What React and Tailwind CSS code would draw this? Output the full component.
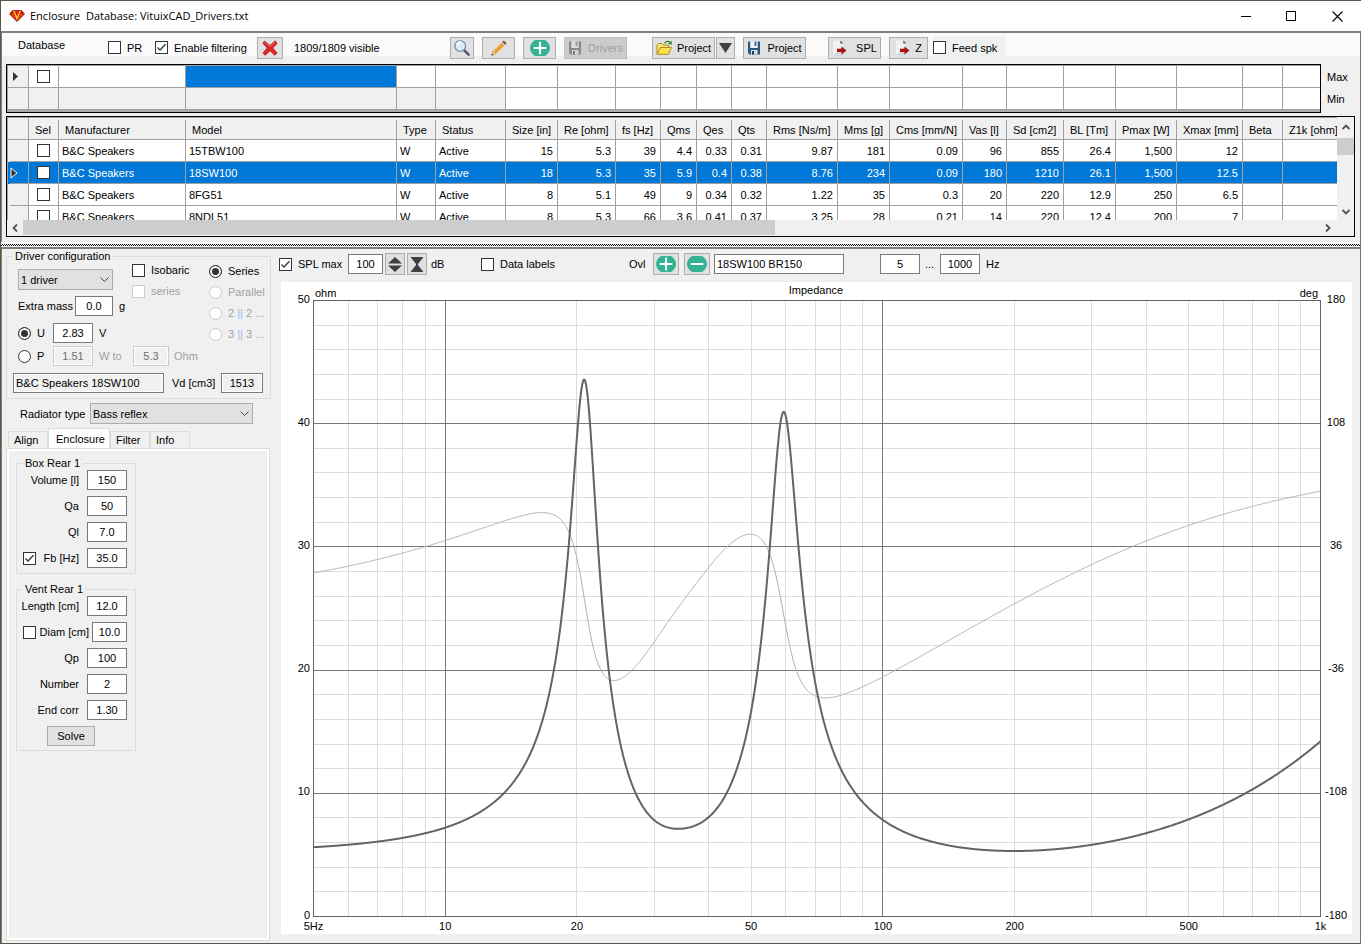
import { useState } from 'react';

const COLUMNS = [
  { label: 'Sel', width: 'w-[30px]' },
  { label: 'Manufacturer', width: 'w-[127px]' },
  { label: 'Model', width: 'w-[211px]' },
  { label: 'Type', width: 'w-[39px]' },
  { label: 'Status', width: 'w-[70px]' },
  { label: 'Size [in]', width: 'w-[52px]' },
  { label: 'Re [ohm]', width: 'w-[58px]' },
  { label: 'fs [Hz]', width: 'w-[45px]' },
  { label: 'Qms', width: 'w-[36px]' },
  { label: 'Qes', width: 'w-[35px]' },
  { label: 'Qts', width: 'w-[35px]' },
  { label: 'Rms [Ns/m]', width: 'w-[71px]' },
  { label: 'Mms [g]', width: 'w-[52px]' },
  { label: 'Cms [mm/N]', width: 'w-[73px]' },
  { label: 'Vas [l]', width: 'w-[44px]' },
  { label: 'Sd [cm2]', width: 'w-[57px]' },
  { label: 'BL [Tm]', width: 'w-[52px]' },
  { label: 'Pmax [W]', width: 'w-[61px]' },
  { label: 'Xmax [mm]', width: 'w-[66px]' },
  { label: 'Beta', width: 'w-[40px]' },
  { label: 'Z1k [ohm]', width: '' },
];

const DRIVERS = [
  ['B&C Speakers', '15TBW100', 'W', 'Active', '15', '5.3', '39', '4.4', '0.33', '0.31', '9.87', '181', '0.09', '96', '855', '26.4', '1,500', '12', '', ''],
  ['B&C Speakers', '18SW100', 'W', 'Active', '18', '5.3', '35', '5.9', '0.4', '0.38', '8.76', '234', '0.09', '180', '1210', '26.1', '1,500', '12.5', '', ''],
  ['B&C Speakers', '8FG51', 'W', 'Active', '8', '5.1', '49', '9', '0.34', '0.32', '1.22', '35', '0.3', '20', '220', '12.9', '250', '6.5', '', ''],
  ['B&C Speakers', '8NDL51', 'W', 'Active', '8', '5.3', '66', '3.6', '0.41', '0.37', '3.25', '28', '0.21', '14', '220', '12.4', '200', '7', '', ''],
];

// ---------- controls ----------

function CheckBox({ label, ...props }) {
  return (
    <label className="flex items-center gap-1.5 whitespace-nowrap has-disabled:text-[#a0a0a0]">
      <span className="grid shrink-0">
        <input
          type="checkbox"
          className="peer col-start-1 row-start-1 size-[13px] appearance-none border border-[#333] bg-white disabled:border-[#ccc]"
          {...props}
        />
        <svg viewBox="0 0 13 13" className="pointer-events-none invisible col-start-1 row-start-1 size-[13px] peer-checked:visible">
          <path d="M2.5 6.5 L5 9 L10.5 3.2" fill="none" stroke="#333" strokeWidth="1.3" />
        </svg>
      </span>
      {label && <span>{label}</span>}
    </label>
  );
}

function Radio({ label, ...props }) {
  return (
    <label className="flex items-center gap-1.5 whitespace-nowrap has-disabled:text-[#a0a0a0]">
      <input
        type="radio"
        className="size-[13px] shrink-0 appearance-none rounded-full border border-[#333] bg-white checked:bg-[#333] checked:shadow-[inset_0_0_0_2px_white] disabled:border-[#ccc]"
        {...props}
      />
      <span>{label}</span>
    </label>
  );
}

function TextBox({ className = 'w-10 text-center', ...props }) {
  return (
    <input
      type="text"
      className={`h-5 shrink-0 border border-[#7a7a7a] bg-white px-0.5 read-only:bg-[#f0f0f0] read-only:shadow-[inset_0_0_0_1px_white] disabled:border-[#ccc] disabled:bg-[#f0f0f0] disabled:text-[#6d6d6d] disabled:shadow-[inset_0_0_0_1px_white] ${className}`}
      {...props}
    />
  );
}

function Select({ className, options, ...props }) {
  return (
    <span className={`grid ${className}`}>
      <select className="col-start-1 row-start-1 h-[21px] w-full appearance-none border border-[#adadad] bg-[#e1e1e1] px-0.5 text-[11px]" {...props}>
        {options.map((o) => <option key={o}>{o}</option>)}
      </select>
      <svg viewBox="0 0 9 5" className="pointer-events-none col-start-1 row-start-1 mr-1 h-[5px] w-[9px] self-center justify-self-end">
        <path d="M0.5 0.5 L4.5 4.5 L8.5 0.5" fill="none" stroke="#444" />
      </svg>
    </span>
  );
}

function Button({ className = '', height = 'h-[22px]', children, ...props }) {
  return (
    <button
      type="button"
      className={`flex shrink-0 items-center justify-center border border-[#adadad] bg-[#e1e1e1] whitespace-nowrap disabled:border-[#bfbfbf] disabled:bg-[#ccc] disabled:text-[#a0a0a0] ${height} ${className}`}
      {...props}
    >
      {children}
    </button>
  );
}

function Group({ title, className, children }) {
  return (
    <fieldset className={`border border-[#dcdcdc] ${className}`}>
      <legend className="-my-1.5 ml-1.5 px-0.5 leading-3">{title}</legend>
      {children}
    </fieldset>
  );
}

// ---------- icons ----------

function GemIcon() {
  return (
    <svg viewBox="0 0 16 12" className="h-3 w-4">
      <path d="M3.5 0.5 H12.5 L15.5 4 L8 11.5 L0.5 4 Z" fill="#d01010" stroke="#8c0c0c" strokeWidth="0.7" />
      <path d="M4 1 L8 10.5 L12 1 L10.4 1 L8 6.6 L5.6 1 Z" fill="#ffcf2a" />
      <path d="M1.5 3.8 L4.2 3.8 L7.2 9.6 Z" fill="#f2451f" />
      <path d="M14.5 3.8 L11.8 3.8 L8.8 9.6 Z" fill="#f2451f" />
      <path d="M6.3 1 H9.7 L8 5 Z" fill="#e2200f" />
    </svg>
  );
}

function CrossIcon() {
  return (
    <svg viewBox="0 0 16 16" className="size-4">
      <path d="M2.5 1 L8 5.4 L13.2 0.8 L15.2 3.4 L10.8 8 L15.2 13 L12.6 15.2 L8 10.8 L3.2 15.4 L0.8 13 L5.2 8 L0.8 3.2 Z" fill="#dc2626" stroke="#a81414" strokeWidth="0.6" />
      <path d="M2.6 2.3 L8 6.6 L13.2 2.2" fill="none" stroke="#f37070" strokeWidth="0.9" />
    </svg>
  );
}

function SearchIcon() {
  return (
    <svg viewBox="0 0 18 18" className="size-[18px]">
      <path d="M11 11 L15.6 15.6" stroke="#555b66" strokeWidth="2.6" strokeLinecap="round" />
      <circle cx="7.2" cy="7" r="5.4" fill="#d9ebfb" stroke="#7f93ad" strokeWidth="1.4" />
      <path d="M4 6.4 A3.6 3.6 0 0 1 8 3.2" fill="none" stroke="#fff" strokeWidth="1.6" />
    </svg>
  );
}

function PencilIcon() {
  return (
    <svg viewBox="0 0 18 18" className="size-[18px]">
      <path d="M1.5 16.5 L3 12 L5.8 15 Z" fill="#f4d7a9" stroke="#a98251" strokeWidth="0.5" />
      <path d="M1.5 16.5 L2.2 14.5 L3.6 15.8 Z" fill="#444" />
      <path d="M3 12 L12 3 L15 6 L5.8 15 Z" fill="#f4a742" />
      <path d="M4.8 13.8 L13.8 4.8" stroke="#d57f1c" strokeWidth="0.9" />
      <path d="M12 3 L13.8 1.4 L16.6 4.2 L15 6 Z" fill="#8a4b2d" />
      <path d="M11.2 3.8 L12.2 2.8 L15.2 5.8 L14.2 6.8 Z" fill="#c9c9c9" />
    </svg>
  );
}

function CircleIcon({ plus }) {
  return (
    <svg viewBox="0 0 20 16" className="h-4 w-5">
      <path d="M5 0 H15 Q20 3.5 20 8 Q20 12.5 15 16 H5 Q0 12.5 0 8 Q0 3.5 5 0 Z" fill="#32b193" />
      <path d={plus ? 'M4.5 8 H15.5 M10 2.5 V13.5' : 'M4.5 8 H15.5'} stroke="#fff" strokeWidth="2.2" strokeLinecap="round" />
    </svg>
  );
}

function FloppyIcon({ gray }) {
  return (
    <svg viewBox="0 0 14 14" className="size-3.5">
      <path d="M1 0.5 H3.5 V7 H10.5 V0.5 H13 V13.5 H2.5 L1 12 Z" fill={gray ? '#8a8a8a' : '#2c5a7c'} />
      <path d="M3.5 0.5 H10.5 V7 H3.5 Z" fill={gray ? '#dedede' : '#eef5fa'} />
      <path d="M7.5 0.5 H9.5 V5 H7.5 Z" fill={gray ? '#9a9a9a' : '#3e6f93'} />
      <path d="M4 9 H10.5 V13.5 H4 Z" fill={gray ? '#d4d4d4' : '#d5e2ec'} />
      <path d="M5 10 H7 V13.5 H5 Z" fill={gray ? '#7a7a7a' : '#1c3d57'} />
    </svg>
  );
}

function FolderIcon() {
  return (
    <svg viewBox="0 0 17 16" className="h-4 w-[17px]">
      <path d="M1 14 V5 L2.5 3.5 H6 L7.5 5 H12.5 V7" fill="#f6e27a" stroke="#b08d1a" />
      <path d="M1 14.3 L4.5 7.5 H15.5 L12.5 14.3 Z" fill="#fbe14b" stroke="#b08d1a" />
      <path d="M8.5 3.2 Q11 0 14 2.4" fill="none" stroke="#2e8b2e" strokeWidth="1.4" />
      <path d="M15.8 0.8 L15.6 5 L12 3.6 Z" fill="#2e8b2e" />
    </svg>
  );
}

function ExportIcon() {
  return (
    <svg viewBox="0 0 16 16" className="size-4">
      <path d="M1 0.5 H8.5 L11.5 3.5 V15.5 H1 Z" fill="#f2f2f2" />
      <path d="M1 15.5 L11.5 5 V15.5 Z" fill="#d6d6d6" />
      <path d="M8.3 0.5 L11.5 3.5 H8.3 Z" fill="#555" />
      <path d="M5 8.8 H9.5 V6.4 L14.5 10.4 L9.5 14.4 V12 H5 Z" fill="#a81212" />
    </svg>
  );
}

function Chevron({ d, className }) {
  return (
    <svg viewBox="0 0 8 8" className={`size-2 ${className}`}>
      <path d={d} fill="none" stroke="#505050" strokeWidth="1.8" />
    </svg>
  );
}

// ---------- window parts ----------

function TitleBar() {
  return (
    <header className="flex h-[30px] items-center bg-white pl-2">
      <GemIcon />
      <h1 className="ml-[5px] flex-1 font-['Open_Sans',sans-serif] text-[11px] whitespace-pre text-black">Enclosure  Database: VituixCAD_Drivers.txt</h1>
      <button type="button" aria-label="Minimize" className="grid h-full w-[46px] place-items-center">
        <svg viewBox="0 0 11 11" className="size-[11px]"><path d="M0 5.5 H10" stroke="#000" /></svg>
      </button>
      <button type="button" aria-label="Maximize" className="grid h-full w-[45px] place-items-center">
        <svg viewBox="0 0 11 11" className="size-[11px]"><path d="M0.5 0.5 H9.5 V9.5 H0.5 Z" fill="none" stroke="#000" /></svg>
      </button>
      <button type="button" aria-label="Close" className="mr-px grid h-full w-[46px] place-items-center">
        <svg viewBox="0 0 11 11" className="size-[11px]"><path d="M0.5 0.5 L10.5 10.5 M10.5 0.5 L0.5 10.5" stroke="#000" strokeWidth="1.1" /></svg>
      </button>
    </header>
  );
}

function Toolbar() {
  return (
    <div className="flex h-[31px] items-center bg-gradient-to-b from-[#fafafa] from-75% to-[#f0f0f0] to-75% pb-0.5 pl-4">
      <span className="mb-1.5 w-[90px]">Database</span>
      <div className="w-[47px]"><CheckBox label="PR" /></div>
      <div className="w-[102px]"><CheckBox label="Enable filtering" defaultChecked /></div>
      <Button className="w-[26px]" aria-label="Clear filter"><CrossIcon /></Button>
      <span className="ml-[11px] w-[156px]">1809/1809 visible</span>
      <div className="flex gap-2">
        <Button className="w-6" aria-label="Search"><SearchIcon /></Button>
        <Button className="w-[33px]" aria-label="Edit"><PencilIcon /></Button>
        <Button className="w-[33px]" aria-label="Add"><CircleIcon plus /></Button>
        <Button className="w-[63px] gap-1.5" disabled><FloppyIcon gray />Drivers</Button>
      </div>
      <div className="ml-[25px] flex gap-px">
        <Button className="w-[63px] gap-1"><FolderIcon />Project</Button>
        <Button className="w-[19px]" aria-label="Recent projects">
          <svg viewBox="0 0 13 10" className="h-2.5 w-[13px]"><path d="M0 0 H13 L6.5 10 Z" fill="#404040" /></svg>
        </Button>
      </div>
      <Button className="ml-2 w-[63px] gap-1.5"><FloppyIcon />Project</Button>
      <Button className="ml-[22px] w-[53px] gap-2"><ExportIcon />SPL</Button>
      <Button className="ml-2 w-[39px] gap-1"><ExportIcon />Z</Button>
      <div className="ml-[5px] bg-[#f0f0f0] py-1 pr-2"><CheckBox label="Feed spk" /></div>
    </div>
  );
}

function ColGroup() {
  return (
    <colgroup>
      <col className="w-[21px]" />
      {COLUMNS.map((c) => <col key={c.label} className={c.width} />)}
    </colgroup>
  );
}

function FilterGrid() {
  return (
    <div className="flex gap-1.5 pl-1">
      <div className="min-w-0 flex-1 border border-black bg-[#ababab] pb-0.5">
        <div className="border-t border-l border-[#a0a0a0]">
          <table className="w-full table-fixed border-separate border-spacing-0">
            <ColGroup />
            <tbody>
              {['Max', 'Min'].map((limit, row) => (
                <tr key={limit} className="h-[22px]">
                  <th className="border-r border-b border-[#a0a0a0] bg-[#f0f0f0] p-0">
                    {row === 0 && <svg viewBox="0 0 5 9" className="ml-[5px] h-[9px] w-[5px]"><path d="M0 0 L5 4.5 L0 9 Z" fill="#333" /></svg>}
                  </th>
                  {COLUMNS.map((c, i) => {
                    const bg = row === 0 ? (i === 2 ? 'bg-[#0078d7]' : 'bg-white') : (i < 5 ? 'bg-[#f0f0f0]' : 'bg-white');
                    return (
                      <td key={c.label} className={`border-r border-b border-[#a0a0a0] p-0 last:border-r-0 ${bg}`}>
                        {row === 0 && i === 0 && <div className="flex justify-center"><CheckBox aria-label="Filter selected" /></div>}
                      </td>
                    );
                  })}
                </tr>
              ))}
            </tbody>
          </table>
        </div>
      </div>
      <div className="flex w-[33px] flex-col pt-0.5 leading-[22px]">
        <span>Max</span>
        <span>Min</span>
      </div>
    </div>
  );
}

function DriverGrid() {
  const [selected, setSelected] = useState(1);

  return (
    <div className="mt-[3px] mr-[5px] ml-1 border border-black bg-[#f0f0f0]">
      <div className="flex">
        <div className="h-[103px] min-w-0 flex-1 overflow-hidden border-t border-l border-[#a0a0a0] bg-white">
          <table className="w-full table-fixed border-separate border-spacing-0">
            <ColGroup />
            <thead>
              <tr className="h-[22px] bg-[#f0f0f0]">
                <th className="border-r border-b border-[#a0a0a0] p-0" aria-label="Row" />
                {COLUMNS.map((c, i) => (
                  <th key={c.label} className="border-b border-[#a0a0a0] p-0 text-left font-normal whitespace-nowrap">
                    <div className={`mt-0.5 h-[19px] pl-1.5 leading-[21px] ${i < COLUMNS.length - 1 ? 'border-r border-[#a0a0a0]' : ''}`}>{c.label}</div>
                  </th>
                ))}
              </tr>
            </thead>
            <tbody>
              {DRIVERS.map((d, row) => {
                const active = row === selected;
                return (
                  <tr key={d[1]} onClick={() => setSelected(row)} className={`h-[22px] ${active ? 'bg-[#0078d7] text-white' : 'bg-white'}`}>
                    <th className={`border-r border-[#a0a0a0] p-0 ${active ? '' : 'bg-[#f0f0f0]'}`}>
                      <div className="ml-0.5 flex h-[22px] items-center border-b border-[#a0a0a0]">
                        {active && <svg viewBox="0 0 8 12" className="h-3 w-2"><path d="M1 1 L7 6 L1 11 Z" fill="#333" stroke="#fff" /></svg>}
                      </div>
                    </th>
                    <td className="border-r border-b border-[#a0a0a0] p-0">
                      <div className="flex justify-center"><CheckBox aria-label={`Select ${d[1]}`} /></div>
                    </td>
                    {d.map((v, i) => (
                      <td key={i} className={`border-r border-b border-[#a0a0a0] py-0 pr-1 pl-[3px] whitespace-nowrap last:border-r-0 ${i > 3 ? 'text-right' : ''}`}>{v}</td>
                    ))}
                  </tr>
                );
              })}
            </tbody>
          </table>
        </div>
        <div className="flex w-[17px] flex-col items-center">
          <Chevron d="M0.5 6 L4 2.5 L7.5 6" className="my-1.5" />
          <div className="mt-px h-[17px] w-full bg-[#cdcdcd]" />
          <Chevron d="M0.5 2 L4 5.5 L7.5 2" className="mt-auto mb-1" />
        </div>
      </div>
      <div className="flex h-4 items-center">
        <Chevron d="M6 0.5 L2.5 4 L6 7.5" className="mx-1" />
        <div className="flex h-full flex-1"><div className="h-[15px] w-[58%] bg-[#cdcdcd]" /></div>
        <Chevron d="M2 0.5 L5.5 4 L2 7.5" className="mr-[22px] ml-1" />
      </div>
    </div>
  );
}

function DriverConfig() {
  return (
    <Group title="Driver configuration" className="mr-px">
      <div className="pb-[5px] pl-1.5">
        <div className="flex pl-[5px]">
          <div className="w-[191px]">
            <div className="flex">
              <div className="w-[114px] pt-[13px]">
                <Select className="w-[95px]" options={['1 driver', '2 drivers', '3 drivers', '4 drivers']} aria-label="Number of drivers" />
                <label className="mt-1.5 flex items-center"><span className="w-[57px]">Extra mass</span><TextBox className="w-[38px] text-center" defaultValue="0.0" /><span className="ml-1.5">g</span></label>
              </div>
              <div className="flex flex-col gap-1 pt-1.5 leading-[17px]">
                <CheckBox label="Isobaric" />
                <CheckBox label="series" disabled />
              </div>
            </div>
            <div className="mt-[7px] flex items-center">
              <div className="w-[35px]"><Radio name="drive" label="U" defaultChecked /></div>
              <TextBox defaultValue="2.83" aria-label="Voltage" />
              <span className="ml-1.5">V</span>
            </div>
            <div className="mt-[3px] flex items-center">
              <div className="w-[35px]"><Radio name="drive" label="P" /></div>
              <TextBox defaultValue="1.51" aria-label="Power" disabled />
              <span className="ml-1.5 w-[34px] text-[#a0a0a0]">W to</span>
              <TextBox className="w-9 text-center" defaultValue="5.3" aria-label="Load" disabled />
              <span className="ml-[5px] text-[#a0a0a0]">Ohm</span>
            </div>
          </div>
          <div className="flex flex-col gap-1 pt-[7px] leading-[17px]">
            <Radio name="wiring" label="Series" defaultChecked />
            <Radio name="wiring" label="Parallel" disabled />
            <Radio name="wiring" label={<>2 <span className="text-[#8fc0ee]">||</span> 2 ...</>} disabled />
            <Radio name="wiring" label={<>3 <span className="text-[#8fc0ee]">||</span> 3 ...</>} disabled />
          </div>
        </div>
        <div className="mt-[7px] flex items-center">
          <TextBox className="w-[151px]" value="B&C Speakers 18SW100" aria-label="Driver" readOnly />
          <label className="ml-2 flex items-center"><span className="w-[49px]">Vd [cm3]</span><TextBox className="w-[42px] text-center" value="1513" readOnly /></label>
        </div>
      </div>
    </Group>
  );
}

function Param({ label, value, narrow, check, checked }) {
  return (
    <div className="flex items-center justify-end">
      {check && <span className="mr-auto ml-1.5"><CheckBox aria-label={`Lock ${label}`} defaultChecked={checked} /></span>}
      <label className="flex items-center">
        <span className={narrow ? 'mr-[3px]' : 'mr-2'}>{label}</span>
        <TextBox className={narrow ? 'w-[35px] text-center' : 'w-10 text-center'} defaultValue={value} />
      </label>
    </div>
  );
}

const TABS = ['Align', 'Enclosure', 'Filter', 'Info'];

function SidePanel() {
  const [tab, setTab] = useState('Enclosure');

  return (
    <aside className="flex w-[270px] shrink-0 flex-col pt-px pl-1">
      <DriverConfig />
      <label className="mt-1 flex items-center pl-3.5"><span className="w-[70px]">Radiator type</span><Select className="w-[163px]" options={['Bass reflex', 'Closed', 'Passive radiator']} /></label>
      <div className="mt-1 flex items-end pl-0.5" role="tablist">
        {TABS.map((t) => (
          <button
            key={t}
            type="button"
            role="tab"
            aria-selected={t === tab}
            onClick={() => setTab(t)}
            className={`border border-b-0 border-[#dcdcdc] text-left ${t === tab ? 'h-5 w-[62px] bg-white pl-[7px]' : 'h-[17px] w-10 pl-[5px]'}`}
          >
            {t}
          </button>
        ))}
      </div>
      <div className="mr-0.5 mb-0.5 flex-1 border border-[#dcdcdc] bg-white p-0.5">
        <div className="h-full bg-[#f0f0f0] pt-1.5 pl-[7px]">
          <Group title="Box Rear 1" className="w-[120px]">
            <div className="flex flex-col gap-1.5 pt-[7px] pr-2 pb-[5px]">
              <Param label="Volume [l]" value="150" />
              <Param label="Qa" value="50" />
              <Param label="Ql" value="7.0" />
              <Param label="Fb [Hz]" value="35.0" check checked />
            </div>
          </Group>
          <Group title="Vent Rear 1" className="mt-[9px] w-[120px]">
            <div className="flex flex-col gap-1.5 pt-[7px] pr-2 pb-1">
              <Param label="Length [cm]" value="12.0" />
              <Param label="Diam [cm]" value="10.0" narrow check />
              <Param label="Qp" value="100" />
              <Param label="Number" value="2" />
              <Param label="End corr" value="1.30" />
              <Button className="ml-[30px] w-12" height="h-5">Solve</Button>
            </div>
          </Group>
        </div>
      </div>
    </aside>
  );
}

function ChartToolbar() {
  return (
    <div className="-ml-0.5 mb-[3px] flex h-[30px] items-center">
      <div className="w-[69px]"><CheckBox label="SPL max" defaultChecked /></div>
      <TextBox className="w-[35px] text-center" defaultValue="100" aria-label="SPL max" />
      <Button className="ml-0.5 w-5" aria-label="Step range">
        <svg viewBox="0 0 14 15" className="h-[15px] w-3.5"><path d="M7 0 L14 6.5 H0 Z M0 8.5 H14 L7 15 Z" fill="#404040" /></svg>
      </Button>
      <Button className="ml-0.5 w-5" aria-label="Fit range">
        <svg viewBox="0 0 14 15" className="h-[15px] w-3.5"><path d="M0.5 0 H13.5 L8 7 V8 L13.5 15 H0.5 L6 8 V7 Z" fill="#404040" /></svg>
      </Button>
      <span className="ml-1 w-[50px]">dB</span>
      <div className="w-[148px]"><CheckBox label="Data labels" /></div>
      <span className="w-6">Ovl</span>
      <Button className="w-[26px]" aria-label="Add overlay"><CircleIcon plus /></Button>
      <Button className="ml-[5px] w-[26px]" aria-label="Remove overlay"><CircleIcon /></Button>
      <TextBox className="ml-1 w-[130px]" defaultValue="18SW100 BR150" aria-label="Overlay name" />
      <TextBox className="ml-9 w-10 text-center" defaultValue="5" aria-label="Minimum frequency" />
      <span className="ml-[5px] w-[15px]">...</span>
      <TextBox defaultValue="1000" aria-label="Maximum frequency" />
      <span className="ml-1.5">Hz</span>
    </div>
  );
}

// ---------- impedance chart ----------

const PLOT = { left: 32.5, right: 1039.5, top: 18.5, bottom: 634.5 };
const F_MIN = 5;
const F_MAX = 1000;

const fx = (f) => PLOT.left + (Math.log(f / F_MIN) / Math.log(F_MAX / F_MIN)) * (PLOT.right - PLOT.left);
const zy = (z) => PLOT.bottom - (z / 50) * (PLOT.bottom - PLOT.top);
const py = (deg) => PLOT.bottom - ((deg + 180) / 360) * (PLOT.bottom - PLOT.top);

// Voice coil plus parallel resonances [R, Q, f0]
const RE = 5.2;
const LE = 0.00218;
const RESONANCES = [
  [38, 6.9, 20.85],
  [35.5, 6.2, 59.2],
  [0.5, 2, 35],
];

function impedance(f) {
  let re = RE;
  let im = 2 * Math.PI * f * LE;
  RESONANCES.forEach(([r, q, f0]) => {
    const x = q * (f / f0 - f0 / f);
    re += r / (1 + x * x);
    im -= (r * x) / (1 + x * x);
  });
  return { mag: Math.hypot(re, im), phase: (Math.atan2(im, re) * 180) / Math.PI };
}

const SAMPLES = Array.from({ length: 1201 }, (_, i) => F_MIN * (F_MAX / F_MIN) ** (i / 1200));
const toPath = (fn) => SAMPLES.map((f, i) => `${i ? 'L' : 'M'}${fx(f).toFixed(2)} ${fn(impedance(f)).toFixed(2)}`).join('');
const MAG_PATH = toPath((z) => zy(z.mag));
const PHASE_PATH = toPath((z) => py(z.phase));

const MINOR_F = [6, 7, 8, 9, 20, 30, 40, 50, 60, 70, 80, 90, 200, 300, 400, 500, 600, 700, 800, 900];
const MINOR_Z = Array.from({ length: 24 }, (_, i) => (i + 1) * 2).filter((z) => z % 10);
const F_LABELS = [[5, '5Hz'], [10, '10'], [20, '20'], [50, '50'], [100, '100'], [200, '200'], [500, '500'], [1000, '1k']];

function ImpedanceChart() {
  const { left, right, top, bottom } = PLOT;
  return (
    <svg viewBox="0 0 1071 652" className="h-auto w-full bg-white text-[11px]" role="img" aria-label="Impedance">
      <g shapeRendering="crispEdges" fill="none">
        <g stroke="#dcdcdc">
          {MINOR_F.map((f) => <path key={f} d={`M${fx(f)} ${top}V${bottom}`} />)}
          {MINOR_Z.map((z) => <path key={z} d={`M${left} ${zy(z)}H${right}`} />)}
        </g>
        <g stroke="#787878">
          {[10, 100].map((f) => <path key={f} d={`M${fx(f)} ${top}V${bottom}`} />)}
          {[10, 20, 30, 40].map((z) => <path key={z} d={`M${left} ${zy(z)}H${right}`} />)}
        </g>
        <rect x={left} y={top} width={right - left} height={bottom - top} stroke="#646464" />
      </g>
      <path d={PHASE_PATH} fill="none" stroke="#b0b0b0" />
      <path d={MAG_PATH} fill="none" stroke="#646464" strokeWidth="2" />
      <g fill="#000">
        <text x="535" y="12" textAnchor="middle">Impedance</text>
        <text x="34" y="15">ohm</text>
        <text x="1037" y="15" textAnchor="end">deg</text>
        {[0, 10, 20, 30, 40, 50].map((z) => <text key={z} x="29" y={zy(z) + 2} textAnchor="end">{z}</text>)}
        {[180, 108, 36, -36, -108, -180].map((d) => <text key={d} x="1055" y={py(d) + 2} textAnchor="middle">{d}</text>)}
        {F_LABELS.map(([f, label]) => <text key={f} x={fx(f)} y={bottom + 13} textAnchor="middle">{label}</text>)}
      </g>
    </svg>
  );
}

export default function App() {
  return (
    <div className="flex min-h-screen flex-col border-t border-b border-l border-[#5a5548] bg-[#f0f0f0] font-['Liberation_Sans',Arial,sans-serif] text-[11px] leading-4 text-black">
      <TitleBar />
      <main className="flex flex-1 flex-col border-r border-r-[#777]">
        <div className="border-t-2 border-l border-[#808080] pb-[5px]">
          <Toolbar />
          <FilterGrid />
          <DriverGrid />
        </div>
        <div className="border-t border-white pt-px">
          <div className="h-0.5 bg-[repeating-conic-gradient(#000_0_25%,#fff_0_50%)] bg-[size:2px_2px]" />
        </div>
        <div className="mt-px flex flex-1 border-t-2 border-l border-[#808080]">
          <SidePanel />
          <section className="ml-[9px] flex min-w-0 flex-1 flex-col pr-2">
            <ChartToolbar />
            <ImpedanceChart />
          </section>
        </div>
      </main>
    </div>
  );
}
